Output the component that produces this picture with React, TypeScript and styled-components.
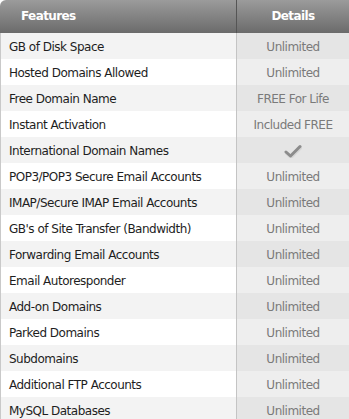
import styled, { createGlobalStyle } from 'styled-components';

const GlobalStyle = createGlobalStyle`
  html, body {
    margin: 0;
    padding: 0;
    background: #ffffff;
  }
  body {
    font-family: "DejaVu Sans", "Liberation Sans", sans-serif;
  }
`;

const features: [string, string][] = [
  ['GB of Disk Space', 'Unlimited'],
  ['Hosted Domains Allowed', 'Unlimited'],
  ['Free Domain Name', 'FREE For Life'],
  ['Instant Activation', 'Included FREE'],
  ['International Domain Names', 'check'],
  ['POP3/POP3 Secure Email Accounts', 'Unlimited'],
  ['IMAP/Secure IMAP Email Accounts', 'Unlimited'],
  ["GB's of Site Transfer (Bandwidth)", 'Unlimited'],
  ['Forwarding Email Accounts', 'Unlimited'],
  ['Email Autoresponder', 'Unlimited'],
  ['Add-on Domains', 'Unlimited'],
  ['Parked Domains', 'Unlimited'],
  ['Subdomains', 'Unlimited'],
  ['Additional FTP Accounts', 'Unlimited'],
  ['MySQL Databases', 'Unlimited'],
];

const Table = styled.div`
  width: 349px;
  display: grid;
  grid-template-columns: 237px 112px;
  font-family: "DejaVu Sans", sans-serif;
  font-size: 12px;
  letter-spacing: -0.5px;
`;

const HeadCell = styled.div<{ $first?: boolean }>`
  height: 33px;
  display: flex;
  align-items: center;
  justify-content: ${(p) => (p.$first ? 'flex-start' : 'center')};
  padding-left: ${(p) => (p.$first ? '21px' : '0')};
  padding-bottom: 1px;
  box-sizing: border-box;
  background: linear-gradient(#9b9b9b, #6b6b6b);
  color: #ffffff;
  font-size: 12px;
  font-weight: bold;
  letter-spacing: -0.6px;
  border-top-left-radius: ${(p) => (p.$first ? '6px' : '0')};
  border-right: ${(p) => (p.$first ? '1px solid #555555' : 'none')};
`;

const Cell = styled.div<{ $odd: boolean }>`
  height: 26px;
  display: flex;
  align-items: center;
  box-sizing: border-box;
  padding: 1px 0 0 8px;
  color: #1e1e1e;
  background: ${(p) => (p.$odd ? '#f3f3f3' : '#ffffff')};
  border-left: 1px solid #c9c9c9;
  border-right: 1px solid #c4c4c4;
  white-space: nowrap;
`;

const Detail = styled.div<{ $odd: boolean }>`
  height: 26px;
  display: flex;
  align-items: center;
  justify-content: center;
  box-sizing: border-box;
  padding-top: 1px;
  color: #7a7a7a;
  background: ${(p) => (p.$odd ? '#e5e5e5' : '#eeeeee')};
  white-space: nowrap;
`;

const Check = () => (
  <svg width="18" height="14" viewBox="0 0 18 14">
    <path d="M2 8.5 L6.5 12.5 L16 3" fill="none" stroke="#d6d6d6" strokeWidth="3.2" strokeLinecap="round" strokeLinejoin="round" transform="translate(0.6,0.8)" />
    <path d="M2 8 L6.5 12 L16 2.5" fill="none" stroke="#8c8c8c" strokeWidth="3" strokeLinecap="round" strokeLinejoin="round" />
  </svg>
);

function App() {
  return (
    <>
      <GlobalStyle />
      <Table>
        <HeadCell $first>Features</HeadCell>
        <HeadCell>Details</HeadCell>
        {features.map(([name, detail], i) => (
          <Row key={name} name={name} detail={detail} odd={i % 2 === 0} />
        ))}
      </Table>
    </>
  );
}

function Row({ name, detail, odd }: { name: string; detail: string; odd: boolean }) {
  return (
    <>
      <Cell $odd={odd}>{name}</Cell>
      <Detail $odd={odd}>{detail === 'check' ? <Check /> : detail}</Detail>
    </>
  );
}

export default App;
